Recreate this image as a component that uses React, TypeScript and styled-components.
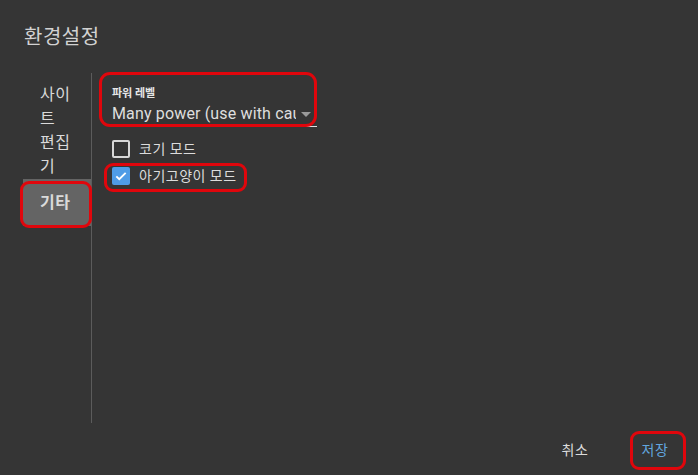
import React from "react";
import styled, { createGlobalStyle } from "styled-components";

const Global = createGlobalStyle`
  html, body { margin: 0; padding: 0; background: #353535; }
  body { font-family: Roboto, "Noto Sans CJK KR", sans-serif; }
`;

const Dialog = styled.div`
  height: 100vh;
  display: flex;
  flex-direction: column;
  background: #353535;
  color: #dcdcdc;
  box-sizing: border-box;
`;

const Title = styled.h2`
  margin: 23px 0 0 24px;
  font-size: 20px;
  line-height: 28px;
  font-weight: 400;
  letter-spacing: 0.5px;
  color: #d2d2d2;
  font-family: Roboto, "Noto Sans CJK KR", sans-serif;
`;

const Body = styled.div`
  flex: 1;
  display: flex;
  margin-top: 22px;
  padding-left: 23px;
  min-height: 0;
`;

const Nav = styled.nav`
  width: 69px;
  border-right: 1px solid #5c5c5c;
  padding-top: 10px;
  box-sizing: border-box;
  display: flex;
  flex-direction: column;
`;

const NavItem = styled.div<{ $active?: boolean }>`
  position: relative;
  padding: ${(p) => (p.$active ? "11.5px 19px 11.5px 17px" : "0 19px 0 17px")};
  font-size: 16px;
  line-height: 24px;
  letter-spacing: 0.5px;
  color: #dadada;
  background: ${(p) => (p.$active ? "#646464" : "transparent")};
  font-weight: ${(p) => (p.$active ? 700 : 400)};
  word-break: break-all;
`;

const Mark = styled.span<{ $l: number; $t: number; $r: number; $b: number; $radius?: number }>`
  position: absolute;
  left: ${(p) => p.$l}px;
  top: ${(p) => p.$t}px;
  right: ${(p) => p.$r}px;
  bottom: ${(p) => p.$b}px;
  border: 3px solid #e0060c;
  border-radius: ${(p) => p.$radius ?? 9}px;
  pointer-events: none;
`;

const Content = styled.div`
  flex: 1;
  padding: 13px 0 0 20px;
  display: flex;
  flex-direction: column;
  align-items: flex-start;
`;

const Field = styled.div`
  position: relative;
  width: 205px;
  border-bottom: 1px solid #e0e0e0;
`;

const FieldLabel = styled.div`
  font-size: 11px;
  line-height: 16px;
  font-weight: 700;
  color: #e6e6e6;
`;

const SelectValue = styled.div`
  display: flex;
  align-items: center;
  font-size: 16px;
  line-height: 24px;
  color: #dedede;
`;

const ValueText = styled.span`
  flex: 1;
  overflow: hidden;
  white-space: nowrap;
  letter-spacing: 0.15px;
`;

const Arrow = styled.span`
  width: 0;
  height: 0;
  border-left: 5px solid transparent;
  border-right: 5px solid transparent;
  border-top: 5px solid #9a9a9a;
  margin: 0 6px 0 5px;
`;

const CheckList = styled.div`
  margin-top: 13px;
  display: flex;
  flex-direction: column;
  gap: 9px;
`;

const CheckRow = styled.label`
  position: relative;
  display: flex;
  align-items: center;
  gap: 9px;
  font-size: 14px;
  line-height: 18px;
  letter-spacing: 0.5px;
  color: #dcdcdc;
`;

const Box = styled.span<{ $checked?: boolean }>`
  width: 18px;
  height: 18px;
  box-sizing: border-box;
  border-radius: 2px;
  border: ${(p) => (p.$checked ? "none" : "2px solid #d8d8d8")};
  background: ${(p) => (p.$checked ? "#4f9ce6" : "transparent")};
  display: flex;
  align-items: center;
  justify-content: center;
`;

const Footer = styled.div`
  display: flex;
  justify-content: flex-end;
  gap: 16px;
  padding: 8px 11px 8px 8px;
`;

const Button = styled.button<{ $primary?: boolean }>`
  position: relative;
  min-width: 64px;
  height: 36px;
  padding: 0 8px;
  background: transparent;
  border: none;
  font-family: Roboto, "Noto Sans CJK KR", sans-serif;
  font-size: 14px;
  letter-spacing: 0.5px;
  color: ${(p) => (p.$primary ? "#62a6df" : "#dcdcdc")};
`;

export default function App() {
  return (
    <Dialog>
      <Global />
      <Title>환경설정</Title>
      <Body>
        <Nav>
          <NavItem>사이트 편집기</NavItem>
          <NavItem $active>
            기타
            <Mark $l={-3} $t={2} $r={-1} $b={-2} />
          </NavItem>
        </Nav>
        <Content>
          <Field>
            <FieldLabel>파워 레벨</FieldLabel>
            <SelectValue>
              <ValueText>Many power (use with caution)</ValueText>
              <Arrow />
            </SelectValue>
            <Mark $l={-13} $t={-14} $r={0} $b={-1} $radius={11} />
          </Field>
          <CheckList>
            <CheckRow>
              <Box />
              코기 모드
            </CheckRow>
            <CheckRow>
              <Box $checked>
                <svg width="14" height="14" viewBox="0 0 24 24">
                  <path d="M4 12.5l5 5L20 6.5" fill="none" stroke="#fff" strokeWidth="3.2" />
                </svg>
              </Box>
              아기고양이 모드
              <Mark $l={-8} $t={-4} $r={-10} $b={-7} />
            </CheckRow>
          </CheckList>
        </Content>
      </Body>
      <Footer>
        <Button>취소</Button>
        <Button $primary>
          저장
          <Mark $l={7} $t={0} $r={1} $b={-3} />
        </Button>
      </Footer>
    </Dialog>
  );
}
